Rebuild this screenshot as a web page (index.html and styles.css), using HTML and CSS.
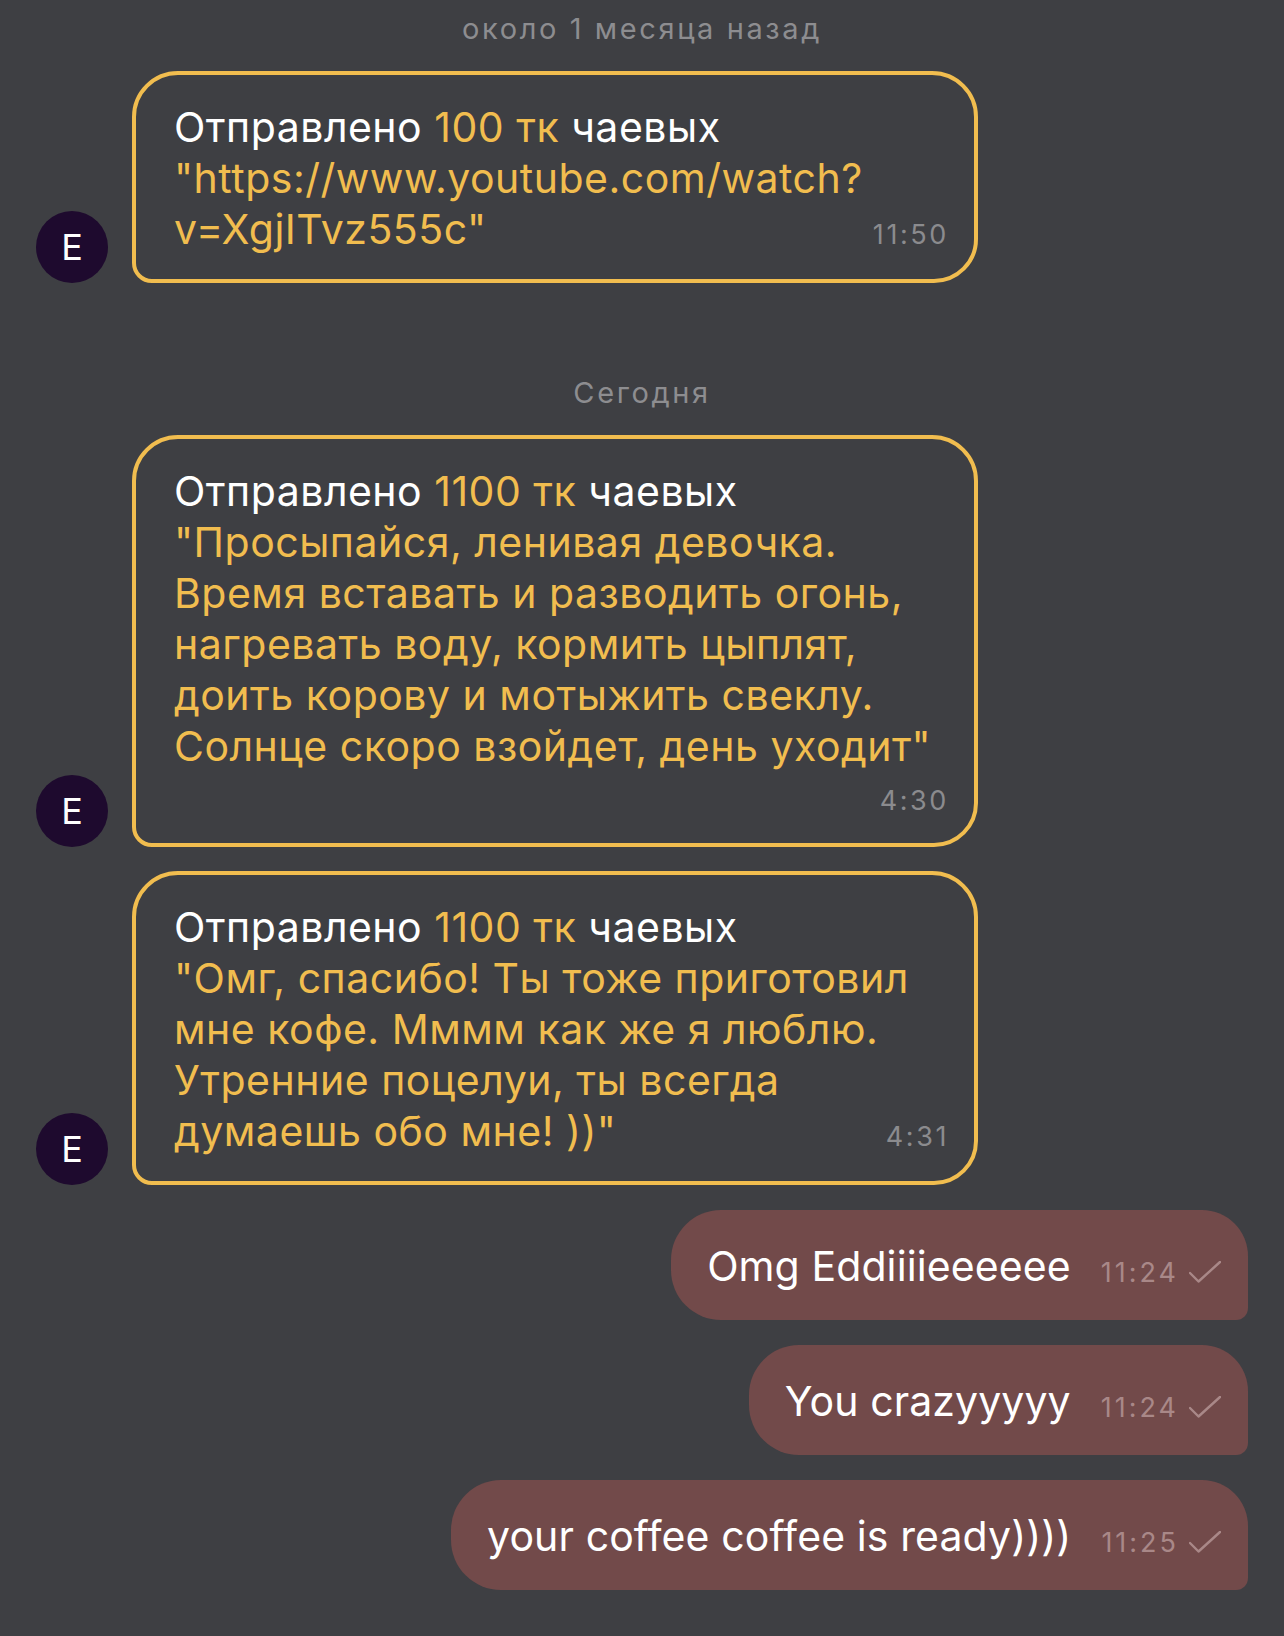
FILE: index.html
```html
<!DOCTYPE html>
<html lang="ru">
<head>
<meta charset="utf-8">
<title>Чат</title>
<link rel="stylesheet" href="styles.css">
</head>
<body>
<div class="chat">
  <div class="date date-first">около 1 месяца назад</div>

  <div class="row in">
    <div class="avatar">E</div>
    <div class="bubble">
      <div class="text">Отправлено <span class="gold">100 тк</span> чаевых<br><span class="gold">"https://www.youtube.com/watch?</span></div>
      <div class="last"><span class="gold">v=XgjITvz555c"</span><span class="time">11:50</span></div>
    </div>
  </div>

  <div class="date date-next">Сегодня</div>

  <div class="row in">
    <div class="avatar">E</div>
    <div class="bubble">
      <div class="text">Отправлено <span class="gold">1100 тк</span> чаевых<br><span class="gold">"Просыпайся, ленивая девочка.<br>Время вставать и разводить огонь,<br>нагревать воду, кормить цыплят,<br>доить корову и мотыжить свеклу.<br>Солнце скоро взойдет, день уходит"</span></div>
      <div class="time-row"><span class="time">4:30</span></div>
    </div>
  </div>

  <div class="row in gap-in">
    <div class="avatar">E</div>
    <div class="bubble">
      <div class="text">Отправлено <span class="gold">1100 тк</span> чаевых<br><span class="gold">"Омг, спасибо! Ты тоже приготовил<br>мне кофе. Мммм как же я люблю.<br>Утренние поцелуи, ты всегда</span></div>
      <div class="last"><span class="gold">думаешь обо мне! ))"</span><span class="time">4:31</span></div>
    </div>
  </div>

  <div class="row out first-out">
    <div class="obubble">
      <span class="otext">Omg Eddiiiieeeeee</span>
      <span class="ometa"><span class="otime">11:24</span><svg class="check" viewBox="0 0 32 22" width="32" height="22"><polyline points="1,12 9.5,20.5 31,1" fill="none" stroke="currentColor" stroke-width="2.4" stroke-linecap="round" stroke-linejoin="round"/></svg></span>
    </div>
  </div>

  <div class="row out">
    <div class="obubble">
      <span class="otext">You crazyyyyy</span>
      <span class="ometa"><span class="otime">11:24</span><svg class="check" viewBox="0 0 32 22" width="32" height="22"><polyline points="1,12 9.5,20.5 31,1" fill="none" stroke="currentColor" stroke-width="2.4" stroke-linecap="round" stroke-linejoin="round"/></svg></span>
    </div>
  </div>

  <div class="row out">
    <div class="obubble">
      <span class="otext">your coffee coffee is ready))))</span>
      <span class="ometa"><span class="otime">11:25</span><svg class="check" viewBox="0 0 32 22" width="32" height="22"><polyline points="1,12 9.5,20.5 31,1" fill="none" stroke="currentColor" stroke-width="2.4" stroke-linecap="round" stroke-linejoin="round"/></svg></span>
    </div>
  </div>
</div>
</body>
</html>
```

FILE: styles.css
```css
html, body {
  margin: 0;
  padding: 0;
  background: #3e3f43;
}

body {
  font-family: Inter, "Liberation Sans", Arial, sans-serif;
  color: #ffffff;
  min-height: 1636px;
}

.chat {
  padding: 9px 36px 0 36px;
  display: flex;
  flex-direction: column;
}

.date {
  text-align: center;
  font-size: 29px;
  line-height: 40px;
  color: #8d8d90;
  letter-spacing: 2.6px;
}

.date-first {
  margin-bottom: 22px;
}

.date-next {
  margin-top: 90px;
  margin-bottom: 22px;
}

.row {
  display: flex;
  align-items: flex-end;
}

.row.in {
  gap: 24px;
}

.row.gap-in {
  margin-top: 24px;
}

.row.out {
  justify-content: flex-end;
  margin-top: 25px;
}

.row.first-out {
  margin-top: 25px;
}

.avatar {
  width: 72px;
  height: 72px;
  border-radius: 50%;
  background: #1e0a2e;
  color: #ffffff;
  font-size: 36px;
  font-weight: 400;
  display: flex;
  align-items: center;
  justify-content: center;
  flex: none;
}

.bubble {
  box-sizing: border-box;
  width: 846px;
  border: 4px solid #f1bd4f;
  border-radius: 46px 46px 44px 20px;
  padding: 27px 25px 19px 38px;
  font-size: 41px;
  line-height: 51px;
  letter-spacing: 0.5px;
}

.gold {
  color: #f1bd4f;
}

.last {
  display: flex;
  justify-content: space-between;
  align-items: baseline;
}

.time-row {
  text-align: right;
  line-height: 47px;
}

.time {
  font-size: 27px;
  color: #8b8b8e;
  letter-spacing: 2.6px;
}

.obubble {
  box-sizing: border-box;
  height: 110px;
  background: #724a4a;
  border-radius: 50px 46px 12px 50px;
  padding: 0 27px 0 36px;
  display: flex;
  align-items: center;
  gap: 30px;
}

.otext {
  font-size: 41px;
  line-height: 51px;
  letter-spacing: 0.1px;
  color: #ffffff;
  padding-top: 2px;
}

.ometa {
  display: flex;
  align-items: center;
  gap: 10px;
  color: #a98888;
  padding-top: 14px;
}

.otime {
  font-size: 27px;
  letter-spacing: 3px;
}

.check {
  display: block;
}
```
